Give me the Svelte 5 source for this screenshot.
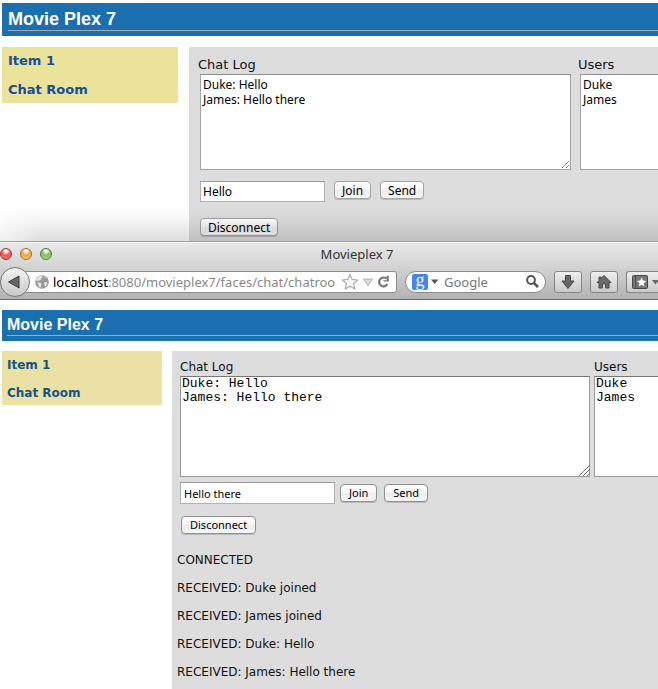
<script>
  const windows = [
    {
      id: 'duke',
      log: 'Duke: Hello\nJames: Hello there',
      users: 'Duke\nJames',
      message: 'Hello',
      output: []
    },
    {
      id: 'james',
      log: 'Duke: Hello\nJames: Hello there',
      users: 'Duke\nJames',
      message: 'Hello there',
      output: [
        'CONNECTED',
        'RECEIVED: Duke joined',
        'RECEIVED: James joined',
        'RECEIVED: Duke: Hello',
        'RECEIVED: James: Hello there'
      ]
    }
  ];
</script>

{#snippet page(w)}
  <div class="page {w.id}">
    <header><h1>Movie Plex 7</h1></header>
    <div class="columns">
      <nav>
        <a href="#item1">Item 1</a>
        <a href="#chat">Chat Room</a>
      </nav>
      <main>
        <form onsubmit={(e) => e.preventDefault()}>
          <div class="boards">
            <div class="board">
              <label for="{w.id}-log">Chat Log</label>
              <div class="area">
                <textarea id="{w.id}-log" readonly value={w.log}></textarea>
                {#if w.id === 'duke'}
                  <svg class="grip" width="9" height="9" viewBox="0 0 9 9" aria-hidden="true">
                    <path d="M1 8L8 1M5 8L8 5" stroke="#555" stroke-width="1" stroke-dasharray="1.4 .5" />
                  </svg>
                {:else}
                  <svg class="grip" width="11" height="11" viewBox="0 0 11 11" aria-hidden="true">
                    <path d="M0 11L11 0M4 11L11 4M8 11L11 8" stroke="#777" stroke-width="1" />
                  </svg>
                {/if}
              </div>
            </div>
            <div class="board">
              <label for="{w.id}-users">Users</label>
              <div class="area">
                <textarea class="cut" id="{w.id}-users" readonly value={w.users}></textarea>
              </div>
            </div>
          </div>
          <div class="controls">
            <input type="text" aria-label="Message" value={w.message} />
            <button type="button">Join</button>
            <button type="button">Send</button>
          </div>
          <div class="controls leave">
            <button type="button">Disconnect</button>
          </div>
        </form>
        {#if w.output.length}
          <div class="output">
            {#each w.output as line}
              <p>{line}</p>
            {/each}
          </div>
        {/if}
      </main>
    </div>
  </div>
{/snippet}

<div class="screen">
  <section class="back-window">
    {@render page(windows[0])}
    <div class="shade"></div>
  </section>

  <section class="front-window">
    <div class="chrome">
      <div class="titlebar">
        <div class="lights">
          <button type="button" class="light red" aria-label="Close"></button>
          <button type="button" class="light amber" aria-label="Minimize"></button>
          <button type="button" class="light green" aria-label="Zoom"></button>
        </div>
        <span class="title">Movieplex 7</span>
      </div>
      <div class="toolbar">
        <button type="button" class="back" aria-label="Back">
          <svg width="14" height="16" viewBox="0 0 14 16"><path d="M1.5 8L12 2V14Z" fill="#666" stroke="#3c3c3c" stroke-linejoin="round" /></svg>
        </button>
        <div class="address">
          <svg class="globe" width="14" height="14" viewBox="0 0 14 14" aria-hidden="true">
            <circle cx="7" cy="7" r="6.8" fill="#999" />
            <path d="M1 4.5C2 2.5 4 1 6.5 .8L7.6 2.2 6 3.4 6.2 4.6 4.4 5.6 3 5.4 2.2 6.6ZM2.6 7.6L5 7.4 6.6 9 5.6 12.8 3.8 11.6 3.4 9.4ZM9.2 1.4L11 2.4 10 3.4ZM9 7.4L11.6 7 12.4 8.4 11 11.2 9.8 11.4 9.4 9.4Z" fill="#e6e6e6" />
          </svg>
          <a class="url" href="#address"><b>localhost</b>:8080/movieplex7/faces/chat/chatroo</a>
          <svg width="18" height="18" viewBox="0 0 18 18" aria-hidden="true">
            <path d="M9 1.5L11.2 6.4 16.6 7 12.6 10.6 13.8 16 9 13.2 4.2 16 5.4 10.6 1.4 7 6.8 6.4Z" fill="#f7f7f7" stroke="#aaa" stroke-width="1.2" stroke-linejoin="round" />
          </svg>
          <svg width="12" height="10" viewBox="0 0 12 10" aria-hidden="true"><path d="M1.5 2H10.5L6 8.5Z" fill="#ddd" stroke="#aaa" /></svg>
          <svg width="13" height="14" viewBox="0 0 13 14" aria-hidden="true">
            <path d="M9.4 3.6A4.4 4.4 0 1 0 10.4 9" fill="none" stroke="#777" stroke-width="2.2" />
            <path d="M11.8 .8V6.6H6.4V5.2H9.6V.8Z" fill="#777" />
          </svg>
        </div>
        <div class="search">
          <span class="engine">g</span>
          <svg width="8" height="6" viewBox="0 0 8 6" aria-hidden="true"><path d="M0 .5H7.4L3.7 5Z" fill="#555" /></svg>
          <input type="text" aria-label="Search" placeholder="Google" />
          <svg width="13" height="13" viewBox="0 0 13 13" aria-hidden="true">
            <circle cx="5" cy="5" r="3.9" fill="none" stroke="#555" stroke-width="2" />
            <path d="M7.8 7.8L12 12" stroke="#555" stroke-width="2.6" />
          </svg>
        </div>
        <button type="button" class="tool" aria-label="Downloads">
          <svg width="16" height="16" viewBox="0 0 16 16"><path d="M5.5 1.5H10.5V7H14L8 14.5 2 7H5.5Z" fill="#666" stroke="#484848" stroke-linejoin="round" /></svg>
        </button>
        <button type="button" class="tool" aria-label="Home">
          <svg width="16" height="16" viewBox="0 0 16 16"><path d="M8 1.5L15 8.5H13V14H9.6V9.8H6.4V14H3V8.5H1L3 6.5V3H5V4.5Z" fill="#6c6c6c" stroke="#484848" stroke-linejoin="round" /></svg>
        </button>
        <button type="button" class="tool marks" aria-label="Bookmarks">
          <svg width="28" height="16" viewBox="0 0 28 16">
            <rect x=".5" y="1.5" width="15" height="13" rx="1" fill="#777" stroke="#484848" />
            <path d="M3.5 2V14" stroke="#4c4c4c" />
            <path d="M9.6 3.6L11 6.6 14.2 7 11.8 9.2 12.4 12.4 9.6 10.8 6.8 12.4 7.4 9.2 5 7 8.2 6.6Z" fill="#fff" />
            <path d="M20 6H27L23.500 10.500Z" fill="#666" />
          </svg>
        </button>
      </div>
    </div>
    {@render page(windows[1])}
  </section>
</div>

<style>
  :global(body) {
    margin: 0;
    background: #fff;
  }

  .screen {
    display: flex;
    flex-direction: column;
    min-height: 100vh;
    overflow: hidden;
    font-family: 'DejaVu Sans', Verdana, sans-serif;
    color: #111;
  }

  * {
    box-sizing: border-box;
  }

  /* Pages */
  .page {
    display: flex;
    flex-direction: column;
    padding-left: 2px;
  }
  header {
    background: #1a6faf;
    padding-left: 6px;
  }
  h1 {
    margin: 0;
    border-bottom: 1px solid #a9a9a9;
    color: #fff;
    font-family: 'Liberation Sans', Arial, sans-serif;
    font-weight: bold;
  }
  .columns {
    display: flex;
    align-items: flex-start;
  }
  nav {
    display: flex;
    flex-direction: column;
    flex: none;
    background: #ece39b;
    padding-left: 6px;
    font-weight: bold;
  }
  nav a {
    color: #164f93;
    text-decoration: none;
  }
  main {
    flex: 1;
    min-width: 0;
    background: #ddd;
  }
  .boards {
    display: grid;
  }
  .board {
    min-width: 0;
  }
  label {
    display: block;
  }
  .area {
    position: relative;
    display: flex;
  }
  textarea {
    width: 100%;
    margin: 0;
    resize: none;
    overflow: hidden;
    border: 1px solid #a5a5a5;
    border-top-color: #8c8c8c;
    border-radius: 0;
    background: #fff;
    color: #000;
    outline: none;
  }
  textarea.cut {
    border-right: 0;
  }
  .grip {
    position: absolute;
    right: 1px;
    bottom: 1px;
  }
  .controls {
    display: flex;
    align-items: flex-start;
  }
  .controls input {
    border: 1px solid #b0b0b0;
    border-top-color: #999;
    border-radius: 0;
    background: #fff;
    color: #000;
    padding: 0 3px;
    outline: none;
  }
  .controls button {
    border: 1px solid #a3a3a3;
    border-radius: 4px;
    background: linear-gradient(#fff, #f6f6f6 50%, #ececec 50%, #f6f6f6);
    color: #000;
    text-align: center;
    white-space: nowrap;
    box-shadow: 0 1px 0 #bbb;
  }

  /* Back window */
  .back-window {
    position: relative;
    height: 241px;
    overflow: hidden;
    padding-top: 3px;
  }
  .shade {
    position: absolute;
    inset: auto 0 0 0;
    height: 34px;
    background: linear-gradient(transparent, rgba(0, 0, 0, 0.04) 40%, rgba(0, 0, 0, 0.13));
    mask-image: linear-gradient(90deg, rgba(0, 0, 0, 0.4), #000 40px);
    pointer-events: none;
  }
  .duke header {
    padding-bottom: 5px;
  }
  .duke h1 {
    font-size: 18px;
    line-height: 20px;
    padding: 6px 0 1px;
  }
  .duke .columns {
    padding-top: 11px;
    gap: 11px;
  }
  .duke nav {
    width: 176px;
    height: 56px;
    padding-top: 6px;
    gap: 13px;
    font-size: 13px;
    line-height: 16px;
  }
  .duke main {
    min-height: 200px;
    padding: 9px 0 0 11px;
    font-size: 13px;
  }
  .duke .boards {
    grid-template-columns: minmax(0, 81%) 1fr;
    gap: 9px;
  }
  .duke label {
    margin-left: -2px;
    line-height: 18px;
  }
  .duke textarea {
    height: 96px;
    padding: 2px 2px;
    font: 12px/15px 'Noto Sans', 'Lucida Grande', sans-serif;
  }
  .duke .controls {
    padding-top: 11px;
    gap: 9px;
  }
  .duke .controls input {
    width: 125px;
    height: 21px;
    padding: 0 2px;
    font: 12px 'Noto Sans', 'Lucida Grande', sans-serif;
  }
  .duke .controls button {
    height: 18px;
    padding: 1px 7px 0;
    font: 12px/16px 'Noto Sans', 'Lucida Grande', sans-serif;
  }
  .duke .leave {
    padding-top: 16px;
  }

  /* Front window */
  .front-window {
    display: flex;
    flex-direction: column;
    flex: 1;
    background: #fff;
  }
  .james {
    flex: 1;
    padding-top: 10px;
  }
  .james header {
    padding: 0 0 5px 5px;
  }
  .james h1 {
    font-size: 16px;
    line-height: 20px;
    padding: 5px 0 0;
  }
  .james .columns {
    flex: 1;
    align-items: stretch;
    padding-top: 10px;
    gap: 10px;
  }
  .james nav {
    width: 160px;
    height: 54px;
    padding: 6px 0 0 5px;
    gap: 12px;
    background: #ece1a4;
    font-size: 12px;
    line-height: 16px;
  }
  .james nav a {
    color: #135489;
  }
  .james main {
    padding: 8px 0 0 8px;
    font-size: 12px;
  }
  .james .boards {
    grid-template-columns: 410fr 64fr;
    gap: 4px;
  }
  .james label {
    line-height: 17px;
  }
  .james textarea {
    height: 101px;
    padding: 0 1px;
    border-color: #999;
    border-top-color: #777;
    font: 13px/14px 'Liberation Mono', 'Courier New', monospace;
  }
  .james .grip {
    right: 0;
  }
  .james .controls {
    padding-top: 5px;
    gap: 7px;
    align-items: center;
  }
  .james .controls input {
    width: 155px;
    height: 22px;
    margin-right: -2px;
    font: 11px 'Noto Sans', 'Lucida Grande', sans-serif;
  }
  .james .controls button {
    height: 18px;
    padding: 0 8px;
    border-color: #8f8f8f;
    font: 11px/16px 'Noto Sans', 'Lucida Grande', sans-serif;
  }
  .james .leave {
    padding: 12px 0 0 1px;
  }
  .output {
    margin-left: -3px;
    padding-top: 18px;
  }
  .output p {
    margin: 0 0 12px;
    line-height: 16px;
  }
  .output p:last-child {
    margin-bottom: 0;
  }

  /* Browser chrome */
  .chrome {
    border-top: 1px solid #a0a0a0;
    border-bottom: 1px solid #6a6a6a;
    background: linear-gradient(#e9e9e9, #d0d0d0 50%, #b2b2b2);
    box-shadow: inset 0 1px 0 #f4f4f4;
    font-family: 'Noto Sans', 'Lucida Grande', sans-serif;
  }
  .titlebar {
    display: grid;
    grid-template-columns: 1fr auto 1fr;
    align-items: center;
    height: 24px;
  }
  .lights {
    display: flex;
    gap: 8px;
  }
  .light {
    width: 12px;
    height: 12px;
    padding: 0;
    border: 1px solid;
    border-radius: 50%;
  }
  .red {
    background: radial-gradient(circle at 50% 20%, #fff 0 10%, #ee5b57 45%, #ee7774);
    border-color: #a3302d;
  }
  .amber {
    background: radial-gradient(circle at 50% 20%, #fff 0 10%, #efa43a 45%, #fbd67c);
    border-color: #a86a25;
  }
  .green {
    background: radial-gradient(circle at 50% 20%, #fff 0 10%, #7fbd5b 45%, #b4e58f);
    border-color: #497f35;
  }
  .title {
    padding-left: 56px;
    font-size: 13px;
    line-height: 20px;
    color: #333;
  }
  .toolbar {
    display: flex;
    align-items: center;
    height: 33px;
    padding-bottom: 2px;
    gap: 8px;
  }
  .back {
    position: relative;
    display: flex;
    align-items: center;
    justify-content: center;
    flex: none;
    width: 30px;
    height: 30px;
    margin-right: -13px;
    padding: 0 3px 0 0;
    border: 1px solid #777;
    border-radius: 50%;
    background: linear-gradient(#f4f4f4, #c9c9c9);
  }
  .address,
  .search {
    display: flex;
    align-items: center;
    height: 22px;
    border: 1px solid #8b8b8b;
    background: #fff;
  }
  .address {
    flex: 1;
    min-width: 0;
    padding: 0 6px 0 9px;
    border-radius: 0 3px 3px 0;
    gap: 3px;
  }
  .address svg {
    flex: none;
  }
  .address .globe {
    margin-right: 1px;
  }
  .url {
    flex: 1;
    min-width: 0;
    overflow: hidden;
    white-space: nowrap;
    font-size: 13px;
    line-height: 18px;
    color: #888;
    text-decoration: none;
  }
  .url b {
    font-weight: normal;
    color: #000;
  }
  .search {
    flex: none;
    width: 141px;
    padding: 0 6px;
    border-radius: 11px;
    gap: 3px;
  }
  .engine {
    flex: none;
    width: 16px;
    height: 16px;
    border-radius: 2px;
    background: #4285f0;
    color: #fff;
    font: 18px/12px 'Liberation Serif', serif;
    text-align: center;
  }
  .search svg {
    flex: none;
  }
  .search input {
    flex: 1;
    min-width: 0;
    padding: 0 0 0 2px;
    border: 0;
    outline: none;
    background: none;
    font: 13px/18px 'Noto Sans', 'Lucida Grande', sans-serif;
  }
  .search input::placeholder {
    color: #777;
    opacity: 1;
  }
  .tool {
    display: flex;
    align-items: center;
    justify-content: center;
    flex: none;
    width: 28px;
    height: 22px;
    padding: 0;
    border: 1px solid #858585;
    border-radius: 3px;
    background: linear-gradient(#efefef, #cacaca);
  }
  .tool svg {
    flex: none;
  }
  .marks {
    width: 32px;
    padding-left: 5px;
    justify-content: flex-start;
    border-right: 0;
    border-radius: 3px 0 0 3px;
    overflow: hidden;
  }
</style>
